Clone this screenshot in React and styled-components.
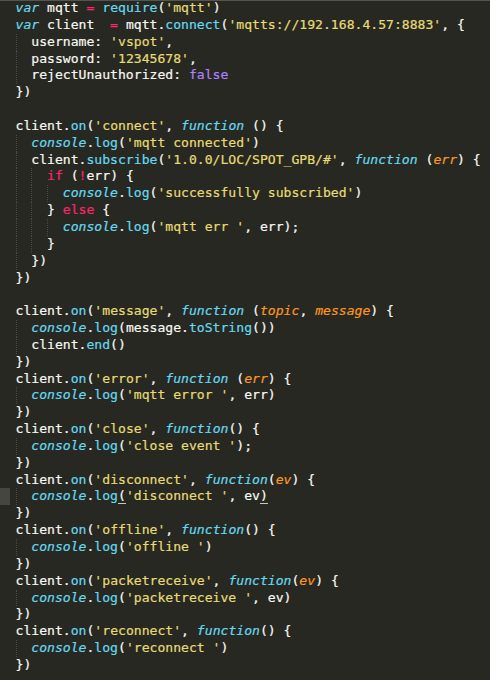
import React from "react";
import styled, { createGlobalStyle } from "styled-components";

const GlobalStyle = createGlobalStyle`
    html, body { margin: 0; padding: 0; background: #272822; }
    body { width: 490px; height: 680px; overflow: hidden; }
`;

const COLORS = {
    k: "#f92672",
    q: "#e6db74",
    f: "#66d9ef",
    s: "#66d9ef",
    p: "#fd971f",
    c: "#ae81ff",
};

// s = storage / italic cyan, p = parameter / italic orange
const M = "match";

const lines = [
    [0, [["s", "var"], " mqtt ", ["k", "="], " ", ["f", "require"], "(", ["q", "'mqtt'"], ")"]],
    [0, [["s", "var"], " client  ", ["k", "="], " mqtt.", ["f", "connect"], "(", ["q", "'mqtts://192.168.4.57:8883'"], ", {"]],
    [1, ["username: ", ["q", "'vspot'"], ","]],
    [1, ["password: ", ["q", "'12345678'"], ","]],
    [1, ["rejectUnauthorized: ", ["c", "false"]]],
    [0, ["})"]],
    [0, [""]],
    [0, ["client.", ["f", "on"], "(", ["q", "'connect'"], ", ", ["s", "function"], " () {"]],
    [1, [["s", "console"], ".", ["f", "log"], "(", ["q", "'mqtt connected'"], ")"]],
    [1, ["client.", ["f", "subscribe"], "(", ["q", "'1.0.0/LOC/SPOT_GPB/#'"], ", ", ["s", "function"], " (", ["p", "err"], ") {"]],
    [2, [["k", "if"], " (", ["k", "!"], "err) {"]],
    [3, [["s", "console"], ".", ["f", "log"], "(", ["q", "'successfully subscribed'"], ")"]],
    [2, ["} ", ["k", "else"], " {"]],
    [3, [["s", "console"], ".", ["f", "log"], "(", ["q", "'mqtt err '"], ", err);"]],
    [2, ["}"]],
    [1, ["})"]],
    [0, ["})"]],
    [0, [""]],
    [0, ["client.", ["f", "on"], "(", ["q", "'message'"], ", ", ["s", "function"], " (", ["p", "topic"], ", ", ["p", "message"], ") {"]],
    [1, [["s", "console"], ".", ["f", "log"], "(message.", ["f", "toString"], "())"]],
    [1, ["client.", ["f", "end"], "()"]],
    [0, ["})"]],
    [0, ["client.", ["f", "on"], "(", ["q", "'error'"], ", ", ["s", "function"], " (", ["p", "err"], ") {"]],
    [1, [["s", "console"], ".", ["f", "log"], "(", ["q", "'mqtt error '"], ", err)"]],
    [0, ["})"]],
    [0, ["client.", ["f", "on"], "(", ["q", "'close'"], ", ", ["s", "function"], "() {"]],
    [1, [["s", "console"], ".", ["f", "log"], "(", ["q", "'close event '"], ");"]],
    [0, ["})"]],
    [0, ["client.", ["f", "on"], "(", ["q", "'disconnect'"], ", ", ["s", "function"], "(", ["p", "ev"], ") {"]],
    [1, [["s", "console"], ".", ["f", "log"], [M, "("], ["q", "'disconnect '"], ", ev", [M, ")"]], true],
    [0, ["})"]],
    [0, ["client.", ["f", "on"], "(", ["q", "'offline'"], ", ", ["s", "function"], "() {"]],
    [1, [["s", "console"], ".", ["f", "log"], "(", ["q", "'offline '"], ")"]],
    [0, ["})"]],
    [0, ["client.", ["f", "on"], "(", ["q", "'packetreceive'"], ", ", ["s", "function"], "(", ["p", "ev"], ") {"]],
    [1, [["s", "console"], ".", ["f", "log"], "(", ["q", "'packetreceive '"], ", ev)"]],
    [0, ["})"]],
    [0, ["client.", ["f", "on"], "(", ["q", "'reconnect'"], ", ", ["s", "function"], "() {"]],
    [1, [["s", "console"], ".", ["f", "log"], "(", ["q", "'reconnect '"], ")"]],
    [0, ["})"]],
];

export default function App() {
    return (
        <>
            <GlobalStyle />
            <Editor>
                {lines.map(([level, tokens, active], i) => (
                    <Line key={i}>
                        <Gutter $active={active} />
                        <Code>
                            {Array.from({ length: level }).map((_, j) => (
                                <Indent key={j}>{"  "}</Indent>
                            ))}
                            {tokens.map((t, j) => {
                                if (typeof t === "string") return t;
                                if (t[0] === M) return <Match key={j}>{t[1]}</Match>;
                                return <Tok key={j} $t={t[0]}>{t[1]}</Tok>;
                            })}
                        </Code>
                    </Line>
                ))}
            </Editor>
        </>
    );
}

const Editor = styled.div`
    box-sizing: border-box;
    width: 490px;
    height: 680px;
    background: #272822;
    box-shadow: inset 0 1px 0 #55554f;
    font-family: "DejaVu Sans Mono", "Liberation Mono", monospace;
    font-size: 13.1px;
    color: #f8f8f2;
`;

const Line = styled.div`
    display: flex;
    height: 16.85px;
    line-height: 16.85px;
`;

const Gutter = styled.div`
    flex: none;
    width: 10px;
    margin-right: 5.5px;
    background: ${(p) => (p.$active ? "#46463f" : "transparent")};
`;

const Code = styled.div`
    white-space: pre;
    -webkit-text-stroke: 0.2px currentColor;
`;

const Indent = styled.span`
    display: inline-block;
    width: 2ch;
    height: 16.85px;
    vertical-align: top;
    box-sizing: border-box;
    border-left: 1px dotted #4a4b44;
`;

const Tok = styled.span`
    color: ${(p) => COLORS[p.$t]};
    font-style: ${(p) => (p.$t === "s" || p.$t === "p" ? "italic" : "normal")};
`;

const Match = styled.span`
    border-bottom: 1px solid #c8c8c2;
`;
